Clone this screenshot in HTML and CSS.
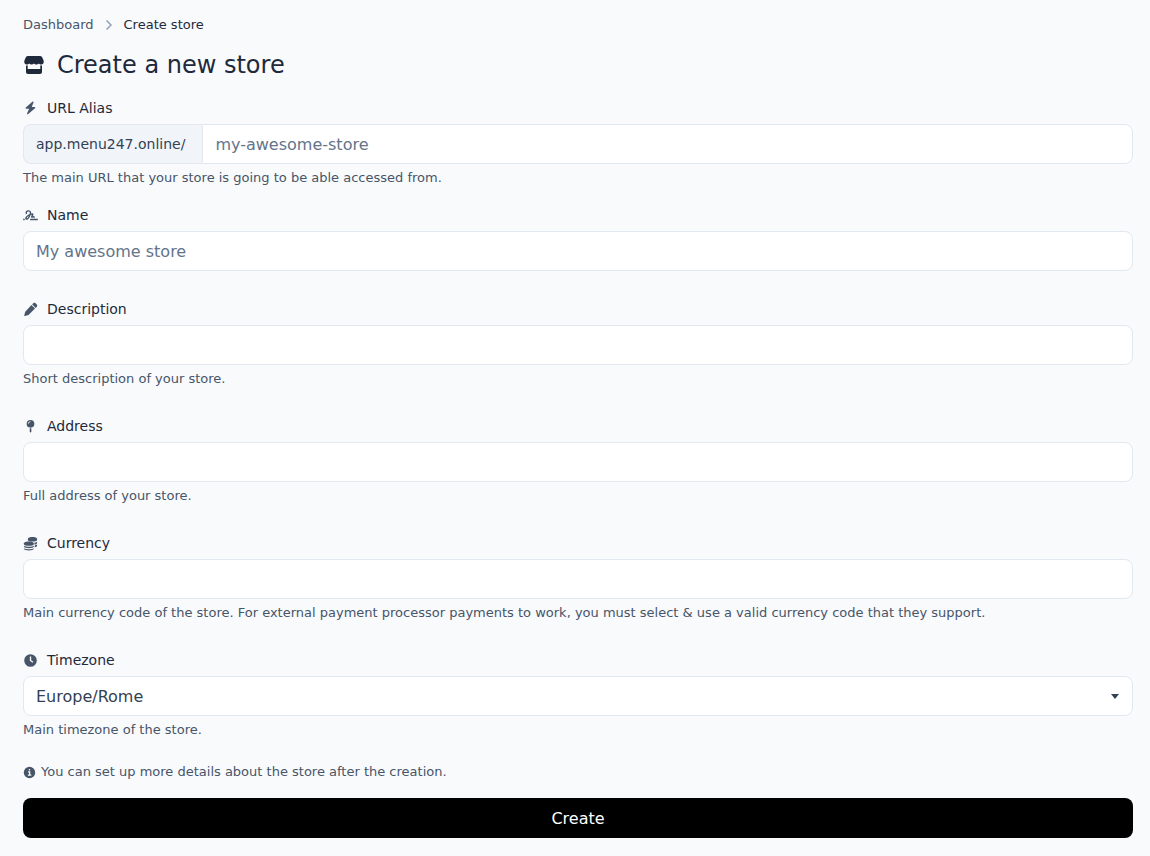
FILE: index.html
```html
<!DOCTYPE html>
<html lang="en">
<head>
  <meta charset="UTF-8">
  <meta name="viewport" content="width=device-width, initial-scale=1.0">
  <title>Create a new store</title>
  <link rel="stylesheet" href="styles.css">
</head>
<body>

  <main class="container">
    <nav aria-label="breadcrumb">
      <ol class="breadcrumbs">
        <li>
          <a href="#">Dashboard</a>
          <svg class="chevron" viewBox="0 0 8 12"><path d="M1.500 1.500 6 6l-4.500 4.500"/></svg>
        </li>
        <li class="active" aria-current="page">Create store</li>
      </ol>
    </nav>

    <h1 class="title">
      <svg class="title-icon" viewBox="0 0 20 20">
        <path d="M4 1h12c.9 0 1.600.3 2 1l1.400 3c.9 2.300 0 4.500-2 4.500-1.200 0-2-.4-2.500-1.100-.6.700-1.400 1.100-2.500 1.100s-1.800-.4-2.400-1.100c-.6.700-1.400 1.100-2.400 1.100s-1.900-.4-2.500-1.100c-.5.700-1.300 1.100-2.500 1.100-2 0-2.900-2.200-2-4.500L2 2c.4-.7 1.100-1 2-1z"/>
        <path d="M2 10.400c.6.100 1.100.1 1.700-.1V14h12.600v-3.700c.6.200 1.100.2 1.700.1V17c0 1.300-.8 2-2 2H4c-1.200 0-2-.7-2-2z"/>
      </svg>
      Create a new store
    </h1>

    <form>
      <div class="form-group compact">
        <label for="url">
          <svg class="icon" viewBox="0 0 16 16"><path d="M10 .8 3 7c-.5.500-.3 1.300.4 1.300h3.200L4.400 13c-.4.900.5 1.500 1.200.9l7.200-6.300c.6-.5.300-1.300-.4-1.300H9.300l1.900-4.600c.3-.9-.5-1.500-1.200-.9z"/></svg>
          URL Alias
        </label>
        <div class="input-group">
          <span class="input-prefix">app.menu247.online/</span>
          <input type="text" id="url" class="form-control" placeholder="my-awesome-store">
        </div>
        <small class="help">The main URL that your store is going to be able accessed from.</small>
      </div>

      <div class="form-group">
        <label for="name">
          <svg class="icon signature" viewBox="0 0 16 16"><path d="M.200 12.200h1.600M3.700 6.500C2.900 4.300 4 3.100 5.800 3.100c2.600 0 2.500 2 1.700 4.100-.8 2.200-2.300 4.800-3.700 4.600-1.600-.3-.2-2.600 1.900-3.800 2.200-1.300 4.500-2 4.800-1.300.3.800-1.700 1.900-1.200 2.900.4.700 1.700-.8 2.400-.3.500.4 0 .8.700.8M7.600 12.200h8.200"/></svg>
          Name
        </label>
        <input type="text" id="name" class="form-control" placeholder="My awesome store">
      </div>

      <div class="form-group">
        <label for="description">
          <svg class="icon" viewBox="0 0 16 16"><path d="m9 3.200 3.800 3.800-6.900 6.900-4 1.100c-.4.100-.7-.2-.6-.6l1.100-4z"/><path d="m9.700 2.500 1.300-1.200c.7-.7 1.700-.7 2.400 0l1.300 1.300c.7.700.7 1.700 0 2.400l-1.200 1.300z"/></svg>
          Description
        </label>
        <input type="text" id="description" class="form-control">
        <small class="help">Short description of your store.</small>
      </div>

      <div class="form-group">
        <label for="address">
          <svg class="icon" viewBox="0 0 16 16"><path fill-rule="evenodd" d="M8 1a4.100 4.100 0 1 1 0 8.200A4.100 4.100 0 0 1 8 1zm0 1.400c-1.500 0-2.600 1.100-2.600 2.600h.8c0-1 .8-1.800 1.800-1.800z"/><path d="M7.200 9.900h1.700v3.300l-.8 1.400-.9-1.400z"/></svg>
          Address
        </label>
        <input type="text" id="address" class="form-control">
        <small class="help">Full address of your store.</small>
      </div>

      <div class="form-group">
        <label for="currency">
          <svg class="icon" viewBox="0 0 16 16">
            <path d="M5.200 3c0-2.500 9.800-2.500 9.800 0v1.200c0 2.200-9.800 2.200-9.800 0z"/>
            <path d="M12 7.200c1.200-.2 2.300-.6 3-1.200v1.400c0 .8-1 1.500-2.500 1.800zM12.500 10.200c1-.2 1.900-.6 2.500-1.100v1.400c0 .8-1 1.400-2.500 1.700z"/>
            <path d="M1 7.700c0-2.400 10.500-2.400 10.500 0v1.100c0 2.200-10.500 2.200-10.500 0z"/>
            <path d="M1 10.500c2.200 1.400 8.300 1.400 10.500 0v1c0 2-10.500 2-10.500 0z"/>
            <path d="M1 13.100c2.200 1.400 8.300 1.400 10.500 0v.6c0 2.200-10.500 2.200-10.500 0z"/>
          </svg>
          Currency
        </label>
        <input type="text" id="currency" class="form-control">
        <small class="help">Main currency code of the store. For external payment processor payments to work, you must select &amp; use a valid currency code that they support.</small>
      </div>

      <div class="form-group">
        <label for="timezone">
          <svg class="icon" viewBox="0 0 16 16"><circle cx="8" cy="8" r="6.700"/><path class="cutout" d="M8 3.800V8l2.600 1.900"/></svg>
          Timezone
        </label>
        <select id="timezone" class="form-control select">
          <option>Europe/Rome</option>
        </select>
        <small class="help">Main timezone of the store.</small>
      </div>

      <p class="note">
        <svg class="note-icon" viewBox="0 0 16 16"><circle cx="8" cy="8" r="7"/><path class="cutout" d="M8 3.600v2M6.200 7.300h2v4M6 11.300h4.200"/></svg>
        You can set up more details about the store after the creation.
      </p>

      <button type="submit" class="btn">Create</button>
    </form>
  </main>

</body>
</html>
```
FILE: styles.css
```css
* {
  box-sizing: border-box;
}

body {
  margin: 0;
  font-family: Verdana, "DejaVu Sans", sans-serif;
  font-size: 16px;
  background-color: #f9fafc;
  color: #1e293b;
}

.container {
  padding: 15px 17px 18px 23px;
}

.breadcrumbs {
  display: flex;
  gap: 11px;
  margin: 0;
  padding: 0;
  list-style: none;
  font-size: 13px;
  line-height: 20px;
}

.breadcrumbs li {
  display: flex;
  align-items: center;
  gap: 11px;
}

.breadcrumbs a {
  color: #475569;
  text-decoration: none;
}

.chevron {
  width: 8px;
  height: 12px;
  fill: none;
  stroke: #94a3b8;
  stroke-width: 1.5;
}

.title {
  display: flex;
  align-items: center;
  gap: 13px;
  margin: 14px 0 13px;
  font-size: 24px;
  font-weight: 400;
  line-height: 32px;
}

.title-icon {
  width: 20px;
  height: 20px;
  margin-left: 1px;
  fill: #1e293b;
}

.form-group {
  padding-top: 4px;
  margin-bottom: 24px;
}

.form-group.compact {
  margin-bottom: 14px;
}

label {
  display: flex;
  align-items: center;
  gap: 9px;
  margin-bottom: 6px;
  font-size: 14px;
  line-height: 20px;
}

.icon {
  width: 15px;
  height: 15px;
  fill: #475569;
}

.signature {
  fill: none;
  stroke: #475569;
  stroke-width: 1.5;
}

.cutout {
  fill: none;
  stroke: #f9fafc;
  stroke-width: 1.5;
}

.form-control {
  display: block;
  width: 100%;
  height: 40px;
  padding: 0 12px;
  font-family: inherit;
  font-size: 16px;
  color: #334155;
  background-color: white;
  border: 1px solid #e2e8f0;
  border-radius: 8px;
}

.form-control::placeholder {
  color: #64748b;
  opacity: 1;
}

.input-group {
  display: flex;
}

.input-group .form-control {
  flex: 1;
  border-radius: 0 8px 8px 0;
}

.input-prefix {
  display: flex;
  align-items: center;
  padding: 0 17px 0 12px;
  font-size: 14px;
  color: #334155;
  background-color: #f1f5f9;
  border: 1px solid #e2e8f0;
  border-right: none;
  border-radius: 8px 0 0 8px;
}

.select {
  appearance: none;
  background-image: url("data:image/svg+xml,%3Csvg xmlns='http://www.w3.org/2000/svg' viewBox='0 0 8 5'%3E%3Cpath fill='%23334155' d='M0 0h8L4 5z'/%3E%3C/svg%3E");
  background-repeat: no-repeat;
  background-position: right 13px center;
  background-size: 8px 5px;
}

.help {
  display: block;
  margin-top: 5px;
  font-size: 13px;
  line-height: 18px;
  color: #475569;
}

.note {
  display: flex;
  align-items: center;
  gap: 5px;
  margin: 0 0 17px;
  font-size: 13px;
  line-height: 18px;
  color: #475569;
}

.note-icon {
  width: 13px;
  height: 13px;
  fill: #475569;
}

.btn {
  display: block;
  width: 100%;
  height: 40px;
  font-family: inherit;
  font-size: 16px;
  color: white;
  background-color: black;
  border: none;
  border-radius: 8px;
  cursor: pointer;
}
```
